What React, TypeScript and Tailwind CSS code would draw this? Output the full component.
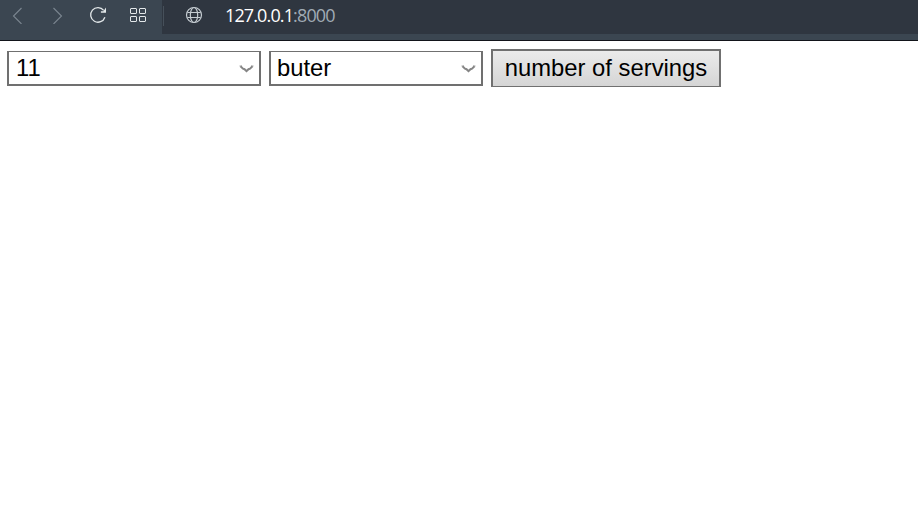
import type { ReactNode } from "react";

function Chevron() {
  return (
    <svg width="15" height="10" viewBox="0 0 15 10" fill="none" className="mt-[2px] shrink-0">
      <path d="M0.5 2 H3 M12 2 H14.5" stroke="#c2c2c2" strokeWidth="1.6" />
      <path d="M1.5 2.2 L4 4.6 L5.5 5.2 L7.5 7.2 L9.5 5.2 L11 4.6 L13.5 2.2" stroke="#858585" strokeWidth="2" />
    </svg>
  );
}

function SelectBox({ className, children }: { className: string; children: ReactNode }) {
  return (
    <button
      className={`flex h-[35px] items-center justify-between border-2 border-t border-[#707070] bg-white pr-[5px] ${className}`}
    >
      <span>{children}</span>
      <Chevron />
    </button>
  );
}

function BrowserBar() {
  return (
    <header className="flex h-[41px] items-start border-b border-[#12141a] bg-[#3b4651]">
      <nav className="flex h-[30px] w-[162px] items-center pl-[12px]">
        <svg width="11" height="18" viewBox="0 0 11 18" fill="none" stroke="#7b8690" strokeWidth="1.1">
          <path d="M9.5 2 L1.5 10 L9.5 18" />
        </svg>
        <svg className="ml-[29px]" width="11" height="18" viewBox="0 0 11 18" fill="none" stroke="#7b8690" strokeWidth="1.1">
          <path d="M1.5 2 L9.5 10 L1.5 18" />
        </svg>
        <svg className="ml-[26px]" width="18" height="18" viewBox="0 0 18 18" fill="none" stroke="#e2e7e9" strokeWidth="1.3">
          <path d="M15.9 11.2 A7.3 7.3 0 1 1 14.7 4.4" />
          <path d="M17 1.6 V6.8 H11.9 V5.2 H14.4 Z" fill="#e2e7e9" stroke="none" />
        </svg>
        <svg className="ml-[22px]" width="18" height="16" viewBox="0 0 18 16" fill="none" stroke="#e2e7e9">
          <rect x="1.5" y="1.5" width="6" height="5" rx="0.5" />
          <rect x="10.5" y="1.5" width="6" height="5" rx="0.5" />
          <rect x="1.5" y="9.5" width="6" height="5" rx="0.5" />
          <rect x="10.5" y="9.5" width="6" height="5" rx="0.5" />
        </svg>
      </nav>
      <div className="flex h-[34px] flex-1 bg-[#2f3640] pl-px">
        <div className="mt-[6px] h-[20px] w-px bg-[#46505a]" />
        <svg className="mt-[6px] ml-[21px]" width="18" height="18" viewBox="0 0 18 18" fill="none" stroke="#c4cbd0" strokeWidth="1.2">
          <circle cx="9" cy="9" r="7.5" />
          <ellipse cx="9" cy="9" rx="3.7" ry="7.5" />
          <path d="M2.4 6.5 H15.6 M2.4 11.5 H15.6" />
        </svg>
        <div className="ml-[22px] pt-[3px] font-['Open_Sans','Noto_Sans',sans-serif] text-[18px] leading-[24px] tracking-[-0.87px] text-white">
          127.0.0.1<span className="text-[#a0abb5]">:8000</span>
        </div>
      </div>
    </header>
  );
}

export default function App() {
  return (
    <div className="h-[520px] w-[918px] overflow-hidden bg-white">
      <BrowserBar />
      <main className="flex items-start gap-2 pt-2 pl-[7px] font-['Liberation_Sans',Arial,sans-serif] text-[23.8px] leading-[28px] text-black">
        <SelectBox className="mt-[2px] w-[254px] pl-[7px]">11</SelectBox>
        <SelectBox className="mt-[2px] w-[214px] pl-[6px]">buter</SelectBox>
        <button className="h-[38px] w-[230px] border-2 border-b border-[#707070] bg-linear-to-b from-[#ebebeb] to-[#d5d5d5] pb-[2px] whitespace-nowrap">
          number of servings
        </button>
      </main>
    </div>
  );
}
